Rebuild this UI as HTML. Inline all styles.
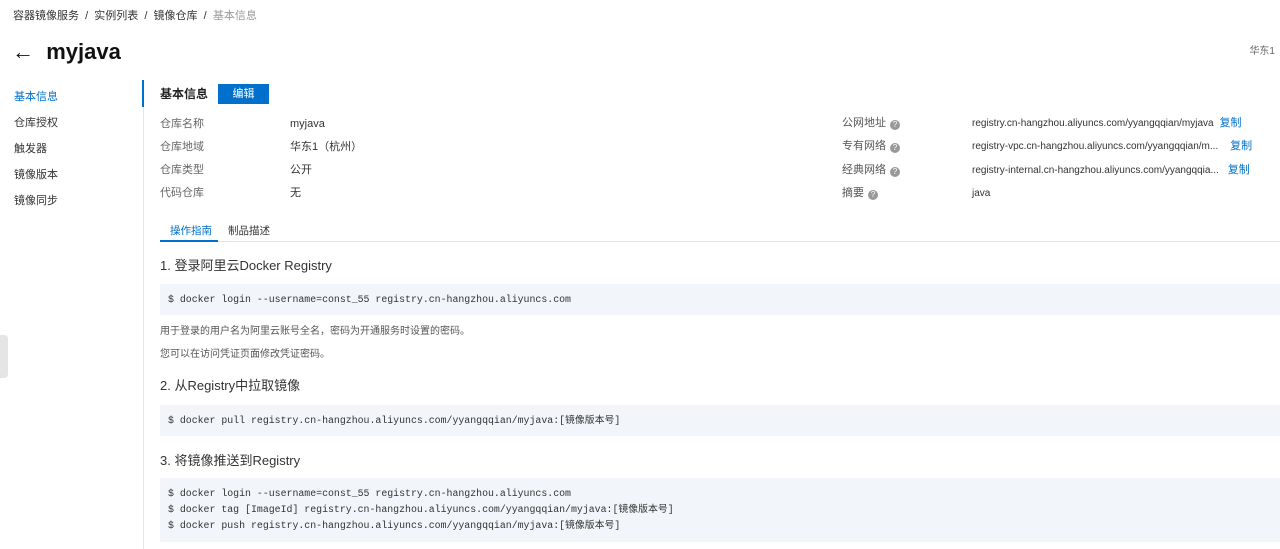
<!DOCTYPE html>
<html><head><meta charset="utf-8"><style>
*{margin:0;padding:0;box-sizing:border-box}
body{width:1280px;height:549px;overflow:hidden;background:#fff;font-family:"Liberation Sans","Noto Sans CJK SC",sans-serif;color:#333;font-size:12px;position:relative}
.a{position:absolute;white-space:nowrap;line-height:14px}
.bc{top:9px;left:13px;font-size:11px;color:#333}
.bc span{color:#999}
.nav{left:14px;font-size:11px;color:#333}
.lbl{left:160px;font-size:11px;color:#666}
.val{left:290px;font-size:11px;color:#333}
.rl{left:842px;font-size:11px;color:#555}
.rv{left:972px;font-size:10px;color:#333}
.cp{font-size:11px;color:#0070cc}
.q{display:inline-block;width:10px;height:10px;border-radius:50%;background:#999;color:#fff;font-size:8px;line-height:10px;text-align:center;margin-left:4px;vertical-align:-1px}
.code{position:absolute;left:160px;right:0;background:#f2f6fa;font-family:"Liberation Mono","Noto Sans CJK SC",monospace;font-size:9.9px;color:#333;padding-left:8px}
.h{left:160px;font-size:13px;color:#333;line-height:16px}
.p{left:160px;font-size:10px;color:#555}
</style></head><body>
<div class="a bc">容器镜像服务 &nbsp;/&nbsp; 实例列表 &nbsp;/&nbsp; 镜像仓库 &nbsp;/&nbsp; <span>基本信息</span></div>
<div class="a" style="top:39px;left:12px;font-size:22px;line-height:26px;color:#111">&#8592;&nbsp; <b style="font-weight:600">myjava</b></div>
<div class="a" style="top:45px;right:5px;font-size:10px;color:#666">华东1</div>
<div style="position:absolute;left:143px;top:80px;width:1px;height:469px;background:#e5e5e5"></div>
<div style="position:absolute;left:142px;top:80px;width:2px;height:27px;background:#0070cc"></div>
<div class="a nav" style="top:90px;color:#0070cc">基本信息</div>
<div class="a nav" style="top:116px">仓库授权</div>
<div class="a nav" style="top:142px">触发器</div>
<div class="a nav" style="top:168px">镜像版本</div>
<div class="a nav" style="top:194px">镜像同步</div>
<div style="position:absolute;left:0;top:335px;width:8px;height:43px;background:#e5e5e5;border-radius:0 4px 4px 0"></div>
<div class="a" style="top:87px;left:160px;font-size:12px;font-weight:bold;color:#222">基本信息</div>
<div class="a" style="top:84px;left:218px;width:51px;height:20px;background:#0070cc;color:#fff;font-size:11px;text-align:center;line-height:20px">编辑</div>
<div class="a lbl" style="top:117px">仓库名称</div><div class="a val" style="top:117px">myjava</div>
<div class="a lbl" style="top:140px">仓库地域</div><div class="a val" style="top:140px">华东1（杭州）</div>
<div class="a lbl" style="top:163px">仓库类型</div><div class="a val" style="top:163px">公开</div>
<div class="a lbl" style="top:186px">代码仓库</div><div class="a val" style="top:186px">无</div>
<div class="a rl" style="top:116px">公网地址<span class="q">?</span></div><div class="a rv" style="top:116px">registry.cn-hangzhou.aliyuncs.com/yyangqqian/myjava <span class="cp">&nbsp;复制</span></div>
<div class="a rl" style="top:139px">专有网络<span class="q">?</span></div><div class="a rv" style="top:139px">registry-vpc.cn-hangzhou.aliyuncs.com/yyangqqian/m... <span class="cp">&nbsp;&nbsp;&nbsp;复制</span></div>
<div class="a rl" style="top:163px">经典网络<span class="q">?</span></div><div class="a rv" style="top:163px">registry-internal.cn-hangzhou.aliyuncs.com/yyangqqia... <span class="cp">&nbsp;&nbsp;复制</span></div>
<div class="a rl" style="top:186px">摘要<span class="q">?</span></div><div class="a rv" style="top:187px">java</div>
<div class="a" style="top:224px;left:170px;font-size:10.5px;color:#0070cc">操作指南</div>
<div class="a" style="top:224px;left:228px;font-size:10.5px;color:#333">制品描述</div>
<div style="position:absolute;left:160px;top:241px;right:0;height:1px;background:#e5e5e5"></div>
<div style="position:absolute;left:160px;top:240px;width:58px;height:2px;background:#0070cc"></div>
<div class="a h" style="top:258px">1. 登录阿里云Docker Registry</div>
<div class="code" style="top:284px;height:31px;line-height:31px">$ docker login --username=const_55 registry.cn-hangzhou.aliyuncs.com</div>
<div class="a p" style="top:325px">用于登录的用户名为阿里云账号全名，密码为开通服务时设置的密码。</div>
<div class="a p" style="top:348px">您可以在访问凭证页面修改凭证密码。</div>
<div class="a h" style="top:378px">2. 从Registry中拉取镜像</div>
<div class="code" style="top:405px;height:31px;line-height:31px">$ docker pull registry.cn-hangzhou.aliyuncs.com/yyangqqian/myjava:[镜像版本号]</div>
<div class="a h" style="top:453px">3. 将镜像推送到Registry</div>
<div class="code" style="top:478px;height:64px;line-height:16px;padding-top:8px">$ docker login --username=const_55 registry.cn-hangzhou.aliyuncs.com<br>$ docker tag [ImageId] registry.cn-hangzhou.aliyuncs.com/yyangqqian/myjava:[镜像版本号]<br>$ docker push registry.cn-hangzhou.aliyuncs.com/yyangqqian/myjava:[镜像版本号]</div>
</body></html>
